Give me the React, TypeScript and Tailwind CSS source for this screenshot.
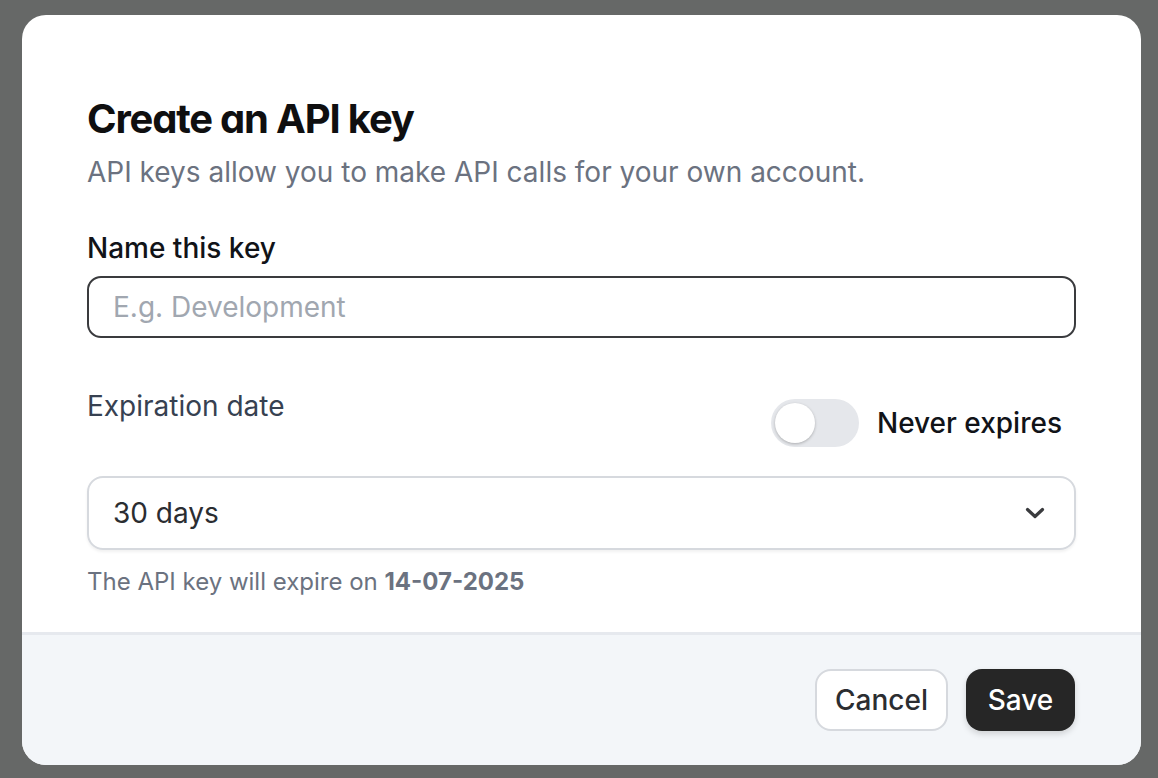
import React from "react";

export default function App() {
  return (
    <div className="w-[1158px] h-[778px] bg-[#666867] pt-[15px] pl-[22px] overflow-hidden font-['Inter',sans-serif]">
      <div className="w-[1119px] h-[750px] bg-white rounded-[24px] overflow-hidden flex flex-col">
        <div className="flex-1 px-[65px] pt-[80px] flex flex-col">
          <h1 className="text-[40px] leading-[48px] font-bold tracking-[-0.03em] text-[#0f0f10] [font-feature-settings:'cv11','ss01']">
            Create an API key
          </h1>
          <p className="mt-[11px] text-[28px] leading-[36px] text-[#6b7280]">
            API keys allow you to make API calls for your own account.
          </p>
          <label className="mt-[40px] text-[28px] leading-[36px] font-medium text-[#111318]">
            Name this key
          </label>
          <div className="mt-[10px] h-[62px] rounded-[14px] border-2 border-[#3a3b3e] flex items-center px-[24px]">
            <span className="text-[28px] leading-[36px] text-[#a1a7b0]">E.g. Development</span>
          </div>
          <div className="mt-[50px] flex items-start justify-between">
            <span className="text-[28px] leading-[36px] text-[#374151]">Expiration date</span>
            <div className="flex items-center gap-[18px] mt-[11px] mr-[14px]">
              <div className="w-[88px] h-[48px] rounded-full bg-[#e5e7eb] p-[4px] flex items-center">
                <div className="w-[40px] h-[40px] rounded-full bg-white shadow-[0_1px_3px_rgba(0,0,0,0.25)]" />
              </div>
              <span className="text-[28px] leading-[36px] font-medium text-[#111318]">Never expires</span>
            </div>
          </div>
          <div className="mt-[29px] h-[74px] rounded-[16px] border-2 border-[#d6d9de] shadow-[0_2px_3px_rgba(0,0,0,0.06)] flex items-center justify-between pl-[24px] pr-[29px]">
            <span className="text-[28px] leading-[36px] text-[#2b2d31]">30 days</span>
            <svg width="20" height="12" viewBox="0 0 20 12" fill="none" stroke="#3a3b3e" strokeWidth="3.2" strokeLinecap="round" strokeLinejoin="round">
              <path d="M2.5 2.5l7.5 7 7.5-7" />
            </svg>
          </div>
          <p className="mt-[16px] text-[24px] leading-[32px] text-[#6b7280]">
            The API key will expire on <span className="font-bold">14-07-2025</span>
          </p>
        </div>
        <div className="h-[133px] bg-[#f3f6f9] border-t-[3px] border-[#e6e9ee] flex items-center justify-end gap-[18px] pr-[66px]">
          <button className="h-[62px] w-[133px] rounded-[16px] bg-white border-2 border-[#d6d9de] text-[28px] font-medium text-[#2b2d31]">
            Cancel
          </button>
          <button className="h-[62px] w-[109px] rounded-[16px] bg-[#262626] text-[28px] font-medium text-white shadow-[0_3px_6px_rgba(0,0,0,0.15)]">
            Save
          </button>
        </div>
      </div>
    </div>
  );
}
